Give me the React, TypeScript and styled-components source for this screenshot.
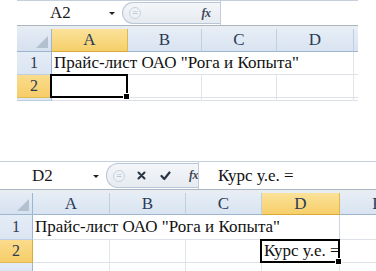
import React from 'react'
import styled, { createGlobalStyle } from 'styled-components'

const serif = `"Liberation Serif", "Times New Roman", serif`

const GlobalStyle = createGlobalStyle`
  html, body { margin: 0; padding: 0; background: #fff; }
  body { font-family: ${serif}; }
`

type Cell = { text?: string; span?: number; selected?: boolean; overflow?: boolean; edge?: boolean }
type Column = { name: string; width: number }

type SheetProps = {
  nameBox: string
  nameBoxWidth: number
  nameIndent: number
  barHeight: number
  bandHeight: number
  editing?: boolean
  formula?: string
  rowHeadWidth: number
  columns: Column[]
  activeCol: number
  activeRow: number
  headHeight: number
  rowHeights: number[]
  rows: Cell[][]
  tail: number
}

const Sheet = styled.div<{ $width: number; $indent: number }>`
  width: ${p => p.$width}px;
  margin-left: ${p => p.$indent}px;
  overflow: hidden;
  display: flex;
  flex-direction: column;
  font-family: ${serif};
`

const FormulaBar = styled.div<{ $height: number }>`
  height: ${p => p.$height}px;
  display: flex;
  align-items: stretch;
  border-top: 1px solid #c6d0dc;
  border-bottom: 1px solid #a9b6c6;
  background: #fff;
`

const NameBox = styled.div<{ $width: number; $indent: number }>`
  width: ${p => p.$width}px;
  flex-shrink: 0;
  display: flex;
  align-items: center;
  position: relative;
  padding-left: ${p => p.$indent}px;
  box-sizing: border-box;
  font-family: ${serif};
  font-size: 17px;
  color: #1a1a1a;
`

const Caret = styled.span`
  position: absolute;
  right: 7px;
  top: 50%;
  margin-top: -1px;
  border-left: 3px solid transparent;
  border-right: 3px solid transparent;
  border-top: 3px solid #222;
`

const Pill = styled.div`
  flex-shrink: 0;
  display: flex;
  align-items: center;
  margin: 1px 0;
  padding-left: 6px;
  border: 1px solid #b9c6d6;
  border-right: none;
  border-radius: 12px 0 0 12px;
  background: linear-gradient(#f4f6f9, #e6ebf1);
`

const Knob = styled.span`
  width: 10px;
  height: 10px;
  border-radius: 50%;
  border: 1px solid #c8d2de;
  background: #eef2f6;
  font-family: "DejaVu Sans", sans-serif;
  font-size: 8px;
  line-height: 9px;
  text-align: center;
  color: #b7c2cf;
`

const Tool = styled.span<{ $w: number; $align?: string }>`
  width: ${p => p.$w}px;
  display: flex;
  justify-content: ${p => p.$align ?? 'center'};
  align-items: center;
`

const Fx = styled.span`
  font-family: ${serif};
  font-style: italic;
  font-weight: bold;
  font-size: 12px;
  color: #3c4757;
  letter-spacing: -0.5px;
`

const Input = styled.div`
  flex: 1;
  border-left: 1px solid #c3ccd8;
  display: flex;
  align-items: center;
  padding-left: 19px;
  font-family: ${serif};
  font-size: 17px;
  color: #111;
  white-space: nowrap;
`

const Band = styled.div<{ $height: number }>`
  height: ${p => p.$height}px;
  background: #e9edf2;
`

const Grid = styled.div<{ $cols: string; $rows: string }>`
  display: grid;
  grid-template-columns: ${p => p.$cols};
  grid-template-rows: ${p => p.$rows};
  background: #fff;
`

const Corner = styled.div`
  background: linear-gradient(#e4ebf5, #d6e1ef);
  border-right: 1px solid #9eb5cf;
  border-bottom: 1px solid #9eb5cf;
  display: flex;
  align-items: flex-end;
  justify-content: flex-end;
  padding: 0 3px 3px 0;
`

const ColHead = styled.div<{ $active: boolean }>`
  background: ${p => (p.$active ? 'linear-gradient(#fbe29a, #f6cf6a)' : 'linear-gradient(#e6edf6, #d9e4f1)')};
  border-right: 1px solid ${p => (p.$active ? '#e0b850' : '#bfcee1')};
  border-bottom: 1px solid ${p => (p.$active ? '#d9a93c' : '#9eb5cf')};
  display: flex;
  align-items: center;
  justify-content: center;
  font-family: ${serif};
  font-size: 17px;
  color: #2b3a55;
  overflow: hidden;
  white-space: nowrap;
`

const RowHead = styled.div<{ $active: boolean }>`
  background: ${p => (p.$active ? 'linear-gradient(#fbdc8c, #f6cd68)' : 'linear-gradient(#e4ecf6, #dbe5f2)')};
  border-right: 1px solid ${p => (p.$active ? '#d9a93c' : '#9eb5cf')};
  border-bottom: 1px solid ${p => (p.$active ? '#e0b850' : '#bfcee1')};
  display: flex;
  align-items: center;
  justify-content: center;
  font-family: ${serif};
  font-size: 16px;
  color: #2b3a55;
`

const CellBox = styled.div<{ $span: number; $selected: boolean; $overflow: boolean; $edge: boolean }>`
  grid-column: span ${p => p.$span};
  position: relative;
  border-right: 1px solid ${p => (p.$edge ? '#cfd5dd' : '#e1e5ea')};
  border-bottom: 1px solid #dde2e8;
  display: flex;
  align-items: center;
  padding-left: 2px;
  font-family: ${serif};
  font-size: 17px;
  color: #111;
  white-space: nowrap;
  overflow: ${p => (p.$overflow || p.$selected ? 'visible' : 'hidden')};
  z-index: ${p => (p.$selected ? 2 : p.$overflow ? 1 : 0)};
  ${p =>
    p.$selected &&
    `
    &::before {
      content: '';
      position: absolute;
      inset: -1px -1px -1px -2px;
      border: 2px solid #000;
    }
    &::after {
      content: '';
      position: absolute;
      right: -3px;
      bottom: -3px;
      width: 5px;
      height: 5px;
      background: #000;
      border: 1px solid #fff;
    }
  `}
`

const Page = styled.div`
  display: flex;
  flex-direction: column;
  gap: 60px;
`

const SelectAll = () => (
  <svg width="12" height="12" viewBox="0 0 12 12">
    <polygon points="12,0 12,12 0,12" fill="#b3c0cf" />
  </svg>
)

const Cross = () => (
  <svg width="9" height="9" viewBox="0 0 9 9">
    <path d="M1.5 1.5 L7.5 7.5 M7.5 1.5 L1.5 7.5" stroke="#2a3444" strokeWidth="2" strokeLinecap="round" />
  </svg>
)

const Check = () => (
  <svg width="11" height="10" viewBox="0 0 11 10">
    <path d="M1.5 5 L4.3 8 L9.5 1.5" stroke="#2a3444" strokeWidth="2.2" fill="none" strokeLinecap="round" strokeLinejoin="round" />
  </svg>
)

const SheetView = (p: SheetProps & { indent: number; width: number }) => {
  const cols = `${p.rowHeadWidth}px ${p.columns.map(c => c.width + 'px').join(' ')}`
  const rows = `${p.headHeight}px ${p.rowHeights.map(h => h + 'px').join(' ')} ${p.tail}px`
  return (
    <Sheet $width={p.width} $indent={p.indent}>
      <FormulaBar $height={p.barHeight}>
        <NameBox $width={p.nameBoxWidth} $indent={p.nameIndent}>
          {p.nameBox}
          <Caret />
        </NameBox>
        <Pill>
          {p.editing ? (
            <>
              <Tool $w={16} $align="flex-start"><Knob>=</Knob></Tool>
              <Tool $w={24}><Cross /></Tool>
              <Tool $w={24}><Check /></Tool>
              <Tool $w={21} $align="flex-end"><Fx>fx</Fx></Tool>
            </>
          ) : (
            <>
              <Tool $w={63} $align="flex-start"><Knob>=</Knob></Tool>
              <Tool $w={28}><Fx>fx</Fx></Tool>
            </>
          )}
        </Pill>
        <Input>{p.formula}</Input>
      </FormulaBar>
      <Band $height={p.bandHeight} />
      <Grid $cols={cols} $rows={rows}>
        <Corner><SelectAll /></Corner>
        {p.columns.map((c, i) => (
          <ColHead key={i} $active={i === p.activeCol}>{c.name}</ColHead>
        ))}
        {p.rows.map((row, r) => (
          <React.Fragment key={r}>
            <RowHead $active={r + 1 === p.activeRow}>{r + 1}</RowHead>
            {row.map((cell, i) => (
              <CellBox
                key={i}
                $span={cell.span ?? 1}
                $selected={!!cell.selected}
                $overflow={!!cell.overflow}
                $edge={!!cell.edge}
              >
                {cell.text}
              </CellBox>
            ))}
          </React.Fragment>
        ))}
        <RowHead $active={false} />
        {p.columns.map((c, i) => (
          <CellBox key={i} $span={1} $selected={false} $overflow={false} $edge={false} />
        ))}
      </Grid>
    </Sheet>
  )
}

const title = 'Прайс-лист ОАО "Рога и Копыта"'

export default function App() {
  return (
    <>
      <GlobalStyle />
      <Page>
        <SheetView
          indent={17}
          width={341}
          nameBox="A2"
          nameBoxWidth={105}
          nameIndent={33}
          barHeight={24}
          bandHeight={3}
          rowHeadWidth={35}
          columns={[
            { name: 'A', width: 76 },
            { name: 'B', width: 74 },
            { name: 'C', width: 75 },
            { name: 'D', width: 77 },
            { name: '', width: 20 },
          ]}
          activeCol={0}
          activeRow={2}
          headHeight={23}
          rowHeights={[23, 23]}
          tail={3}
          rows={[
            [{ text: title, span: 4, overflow: true }, {}],
            [{ selected: true }, {}, {}, {}, {}],
          ]}
        />
        <SheetView
          indent={0}
          width={376}
          nameBox="D2"
          nameBoxWidth={106}
          nameIndent={32}
          editing
          formula="Курс у.е. ="
          barHeight={27}
          bandHeight={3}
          rowHeadWidth={33}
          columns={[
            { name: 'A', width: 77 },
            { name: 'B', width: 76 },
            { name: 'C', width: 76 },
            { name: 'D', width: 78 },
            { name: 'E', width: 76 },
          ]}
          activeCol={3}
          activeRow={2}
          headHeight={22}
          rowHeights={[25, 23]}
          tail={10}
          rows={[
            [{ text: title, span: 4, overflow: true, edge: true }, {}],
            [{}, {}, {}, { text: 'Курс у.е. =', selected: true, overflow: true }, {}],
          ]}
        />
      </Page>
    </>
  )
}
